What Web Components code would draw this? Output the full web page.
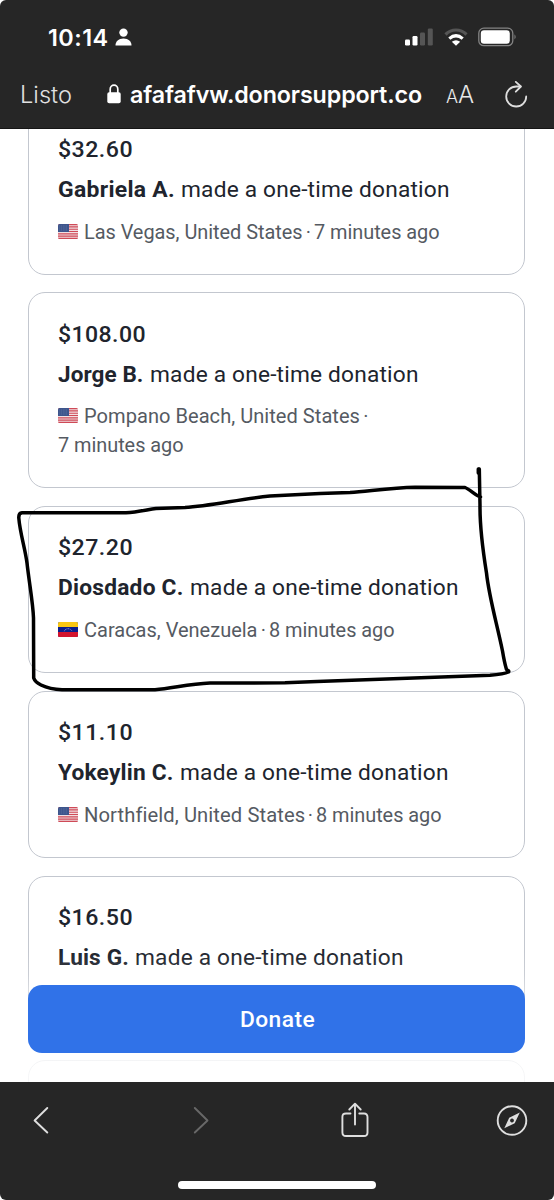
<!DOCTYPE html>
<html lang="es">
<head>
<meta charset="utf-8">
<title>Donations</title>
<style>
html,body{margin:0;height:100%;background:#fff}
body{font-family:Roboto,"Noto Sans",sans-serif;overflow:hidden}
</style>
</head>
<body>
<phone-screen>
  <status-bar slot="top"></status-bar>
  <address-bar slot="top"></address-bar>
  <donation-card amount="$32.60" aw="75" name="Gabriela A." nw="117" flag="us" place="Las Vegas, United States" pw="218.5" when="7 minutes ago"></donation-card>
  <donation-card amount="$108.00" aw="88" name="Jorge B." nw="85.5" flag="us" place="Pompano Beach, United States" pw="276" when="7 minutes ago" wrap></donation-card>
  <donation-card amount="$27.20" aw="75" name="Diosdado C." nw="125.5" flag="ve" place="Caracas, Venezuela" pw="173.5" when="8 minutes ago" marked></donation-card>
  <donation-card amount="$11.10" aw="75" name="Yokeylin C." nw="115.5" flag="us" place="Northfield, United States" pw="220.5" when="8 minutes ago"></donation-card>
  <donation-card amount="$16.50" aw="75" name="Luis G." nw="71" plain></donation-card>
  <donation-card plain></donation-card>
  <donate-bar slot="cta">Donate</donate-bar>
  <browser-toolbar slot="bottom"></browser-toolbar>
</phone-screen>
<script>
// Text run that takes up exactly `w` pixels: the difference from its natural
// width is shared between glyph width and tracking.
class FitText extends HTMLElement {
  connectedCallback() {
    const root = this.attachShadow({mode: 'open'});
    root.innerHTML = `<style>:host{display:inline-block;white-space:pre;flex:none}span{display:inline-block;transform-origin:0 50%}</style><span><slot></slot></span>`;
    const w = parseFloat(this.getAttribute('w'));
    const span = root.querySelector('span');
    this.style.width = w + 'px';
    const natural = span.getBoundingClientRect().width;
    const scale = Math.sqrt(w / natural);
    span.style.letterSpacing = ((w / scale - natural) / this.textContent.length) + 'px';
    span.style.transform = `scaleX(${scale})`;
  }
}

class CountryFlag extends HTMLElement {
  connectedCallback() {
    const us = `<rect width="20" height="15" fill="#f1dfe2"/>
      <path d="M0 .6h20M0 2.9h20M0 5.2h20M0 7.5h20M0 9.8h20M0 12.1h20M0 14.4h20" stroke="#cf4a57" stroke-width="1.15"/>
      <rect width="11" height="8" fill="#3d558c"/>
      <path d="M1.5 2h8.5M1.5 4h8.5M1.5 6h8.5" stroke="#7d8db5" stroke-width=".6" stroke-dasharray=".7 1"/>`;
    const ve = `<rect width="20" height="15" fill="#0b1e8c"/><rect width="20" height="5" fill="#f9c713"/><rect y="10" width="20" height="5" fill="#d3142f"/>
      <path d="M6.3 9.2a3.9 3.2 0 0 1 7.6 0" fill="none" stroke="#a9b3dc" stroke-width=".9" stroke-dasharray=".9 .7"/>`;
    this.attachShadow({mode: 'open'}).innerHTML = `<style>:host{display:block;flex:none;width:20px;height:15px;border-radius:1.5px;overflow:hidden}svg{display:block}</style>
      <svg width="20" height="15">${this.getAttribute('code') === 've' ? ve : us}</svg>`;
  }
}

class DonationCard extends HTMLElement {
  connectedCallback() {
    const a = k => this.getAttribute(k);
    const when = `<fit-text w="125.5">${a('when')}</fit-text>`;
    const wrap = this.hasAttribute('wrap');
    const meta = this.hasAttribute('plain') ? '' : `
      <div class="meta"><country-flag code="${a('flag')}"></country-flag><fit-text class="place" w="${a('pw')}">${a('place')}</fit-text><span class="dot">·</span>${wrap ? '' : when}</div>
      ${wrap ? `<div class="meta">${when}</div>` : ''}`;
    const body = a('amount') ? `
      <div class="amount"><fit-text w="${a('aw')}">${a('amount')}</fit-text></div>
      <div class="who"><fit-text class="name" w="${a('nw')}">${a('name')}</fit-text><fit-text w="268.7">made a one-time donation</fit-text></div>
      ${meta}` : '';
    const mark = this.hasAttribute('marked') ? `<svg class="ink" width="554" height="250" viewBox="0 455 554 250" fill="none" stroke="#000" stroke-width="3.500" stroke-linecap="round" stroke-linejoin="round">
      <path d="M480.500 497C476 496 470 489.500 465 487.500L415 487.300C392 488 370 491 350 492.500L320 493.500L270 496C240 499 210 506 185 507.500L156 508.500C146 510 136 512.500 126 512.700L22 512.700Q18.500 513 18.800 518C20 533 25 548 27 563C29.500 585 33 603 33.500 618L33.700 678Q35 682 41 685Q50 689.300 62 689.700L155 689.700C172 688.500 188 684 210 683L285 682.800C360 679.500 440 677 490 675.300Q504 674 508.500 672Q509.500 671 506.500 669.500Q504.500 663 502.500 651C497 624 489 597 486.500 573C482 545 479.800 522 480 505L479.300 469"/><path d="M478.300 469V473"/></svg>` : '';
    this.attachShadow({mode: 'open'}).innerHTML = `<style>
      :host{display:block;position:relative;box-sizing:border-box;flex:none;border:1px solid #c3c7cf;border-radius:17px;padding:26.500px 0 0 29px;color:#20242d;height:${wrap ? 196 : 167.5}px}
      .amount{display:flex;align-items:center;height:28px;font-weight:500;font-size:22.300px}
      .who{display:flex;align-items:center;height:30px;margin-top:11px;font-size:22.300px;gap:6px}
      .name{font-weight:700}
      .meta{display:flex;align-items:center;height:28.500px;font-size:20px;color:#555a62}
      .who+.meta{margin-top:13.300px}
      country-flag{margin:0 6px 0 0;position:relative;top:-.5px}
      .dot{width:11.500px;text-align:center}
      .ink{position:absolute;left:-29px;top:-52px;overflow:visible;z-index:3;pointer-events:none}
      ${this.hasAttribute('marked') ? ':host{z-index:3}' : ''}
    </style>${body}${mark}`;
  }
}

class StatusBar extends HTMLElement {
  connectedCallback() {
    this.attachShadow({mode: 'open'}).innerHTML = `<style>
      :host{display:flex;align-items:center;height:74px;box-sizing:border-box;padding:0 37px 0 47.500px;color:#fff;font:600 22.500px Inter,sans-serif}
      .grow{flex:1}svg{display:block;flex:none}.person{margin-left:7px}.wifi{margin:0 10px 0 11px}
    </style>
    <fit-text w="60.500">10:14</fit-text>
    <svg class="person" width="17" height="18" fill="#fff"><circle cx="8.500" cy="4.600" r="4.200"/><path d="M.5 17.300C.5 13.500 3.500 10.500 8.500 10.500s8 3 8 6.800q0 .2-.3.200H.8q-.3 0-.3-.2z"/></svg>
    <span class="grow"></span>
    <svg width="28" height="18"><g fill="#fff"><rect x="0" y="11.500" width="5" height="6" rx="1.200"/><rect x="7.500" y="8" width="5" height="9.500" rx="1.200"/></g><g fill="#555"><rect x="15" y="4.500" width="5" height="13" rx="1.200"/><rect x="22.800" y=".5" width="5" height="17" rx="1.200"/></g></svg>
    <svg class="wifi" width="24" height="18" fill="none" stroke-width="3.200"><path d="M1.500 6.500C7.500.5 16.500.5 22.500 6.500" stroke="#555"/><path d="M5.300 10.600C9.500 7 14.500 7 18.700 10.600" stroke="#fff"/><path d="M7.800 13.700Q12 10.600 16.200 13.700L12 17.800z" fill="#fff" stroke="none"/></svg>
    <svg width="39" height="20"><rect x=".8" y="1.200" width="34" height="17.500" rx="5" fill="none" stroke="#838383" stroke-width="1.300"/><rect x="2.800" y="3.200" width="29" height="13.500" rx="3.200" fill="#fff"/><path d="M36.500 7.300q2.200 2.600 0 5.300z" fill="#838383"/></svg>`;
  }
}

class AddressBar extends HTMLElement {
  connectedCallback() {
    this.attachShadow({mode: 'open'}).innerHTML = `<style>
      :host{display:flex;align-items:center;height:55px;box-sizing:border-box;padding:0 26px 14px 20px;color:#fff;font-family:Inter,sans-serif;border-bottom:1px solid #151515}
      svg{display:block;flex:none}.done{font-size:23.500px;font-weight:300;color:#e1e1e1}.lock{margin:0 9px 0 34.500px}.url{font-size:23.500px;font-weight:600}
      .aa{display:flex;align-items:baseline;margin-left:24.500px;font-weight:300;color:#e8e8e8}.s{font-size:18px}.b{font-size:24px}.reload{margin-left:auto}
    </style>
    <fit-text class="done" w="52">Listo</fit-text>
    <svg class="lock" width="14" height="20"><rect x=".3" y="8.300" width="13.400" height="11" rx="1.800" fill="#fff"/><path d="M3.200 9V5.300a3.800 4.100 0 0 1 7.600 0V9" fill="none" stroke="#fff" stroke-width="1.700"/></svg>
    <fit-text class="url" w="292">afafafvw.donorsupport.co</fit-text>
    <span class="aa"><fit-text class="s" w="12">A</fit-text><fit-text class="b" w="16">A</fit-text></span>
    <svg class="reload" width="24" height="27" fill="none" stroke="#dedede" stroke-width="1.800" stroke-linecap="round" stroke-linejoin="round"><path d="M22.200 15.500A10 10 0 1 1 12.200 5.500H16.500"/><path d="M11.800 .9L16.900 5.500L11.800 10.700"/></svg>`;
  }
}

class DonateBar extends HTMLElement {
  connectedCallback() {
    this.attachShadow({mode: 'open'}).innerHTML = `<style>
      :host{display:block;padding:35px 29px 29px 28px;background:linear-gradient(#fff0 0,#ffffff1f 25px,#ffffffb8 65px,#ffffffdb 100%)}
      button{display:flex;align-items:center;justify-content:center;width:100%;height:68px;border:0;border-radius:14px;background:#3072e8;color:#fff;font:500 22px Roboto,sans-serif;padding:1px 0 0}
    </style><button><fit-text w="75">${this.textContent}</fit-text></button>`;
  }
}

class BrowserToolbar extends HTMLElement {
  connectedCallback() {
    this.attachShadow({mode: 'open'}).innerHTML = `<style>
      :host{display:flex;flex-direction:column;align-items:center;height:118px;box-sizing:border-box;padding:19px 26px 0 33px;background:#262626}
      .row{display:flex;align-items:center;width:100%;height:38px}
      .home{width:198px;height:8px;border-radius:4px;background:#fff;margin:42px 0 0 -7px}
      svg{display:block;flex:none;fill:none;stroke:#dedede;stroke-width:1.900;stroke-linecap:round;stroke-linejoin:round}
      .forward{margin-left:144px;stroke:#686868}.share{margin-left:132px}.compass{margin-left:auto}
    </style>
    <div class="row">
      <svg width="16" height="28"><path d="M14.300 2L1.600 14.500L14.300 26.500"/></svg>
      <svg class="forward" width="16" height="28"><path d="M1.800 2L14.500 14.500L1.800 26.500"/></svg>
      <svg class="share" width="28" height="36"><path d="M9.500 11.500H5Q1.400 11.500 1.400 15V30.500Q1.400 34 5 34H23Q26.500 34 26.500 30.500V15Q26.500 11.500 23 11.500H18.300M14 22.500V2M8.300 7.500L14 1.700L19.700 7.500"/></svg>
      <svg class="compass" width="32" height="32"><circle cx="16" cy="16.500" r="14.300"/><path fill-rule="evenodd" d="M23.800 8.500L18.700 19.300L8.300 24.200L13.200 13.700zM16 14.600a1.900 1.900 0 1 0 .01 0z" style="fill:#dedede;stroke:none"/></svg>
    </div><div class="home"></div>`;
  }
}

class PhoneScreen extends HTMLElement {
  connectedCallback() {
    this.attachShadow({mode: 'open'}).innerHTML = `<style>
      :host{display:flex;flex-direction:column;width:554px;height:1200px;overflow:hidden;border-radius:6px;background:#fff}
      header{flex:none;height:129px;background:#262626}
      main{flex:1;min-height:0;position:relative;overflow:hidden}
      .feed{display:flex;flex-direction:column;gap:17.400px;margin-top:-21.500px;padding:0 29px 0 28px}
      .cta{position:absolute;left:0;right:0;bottom:0;z-index:2}
    </style>
    <header><slot name="top"></slot></header>
    <main><div class="feed"><slot></slot></div><div class="cta"><slot name="cta"></slot></div></main>
    <slot name="bottom"></slot>`;
  }
}

customElements.define('phone-screen', PhoneScreen);
customElements.define('fit-text', FitText);
customElements.define('country-flag', CountryFlag);
customElements.define('status-bar', StatusBar);
customElements.define('address-bar', AddressBar);
customElements.define('donation-card', DonationCard);
customElements.define('donate-bar', DonateBar);
customElements.define('browser-toolbar', BrowserToolbar);
</script>
</body>
</html>
